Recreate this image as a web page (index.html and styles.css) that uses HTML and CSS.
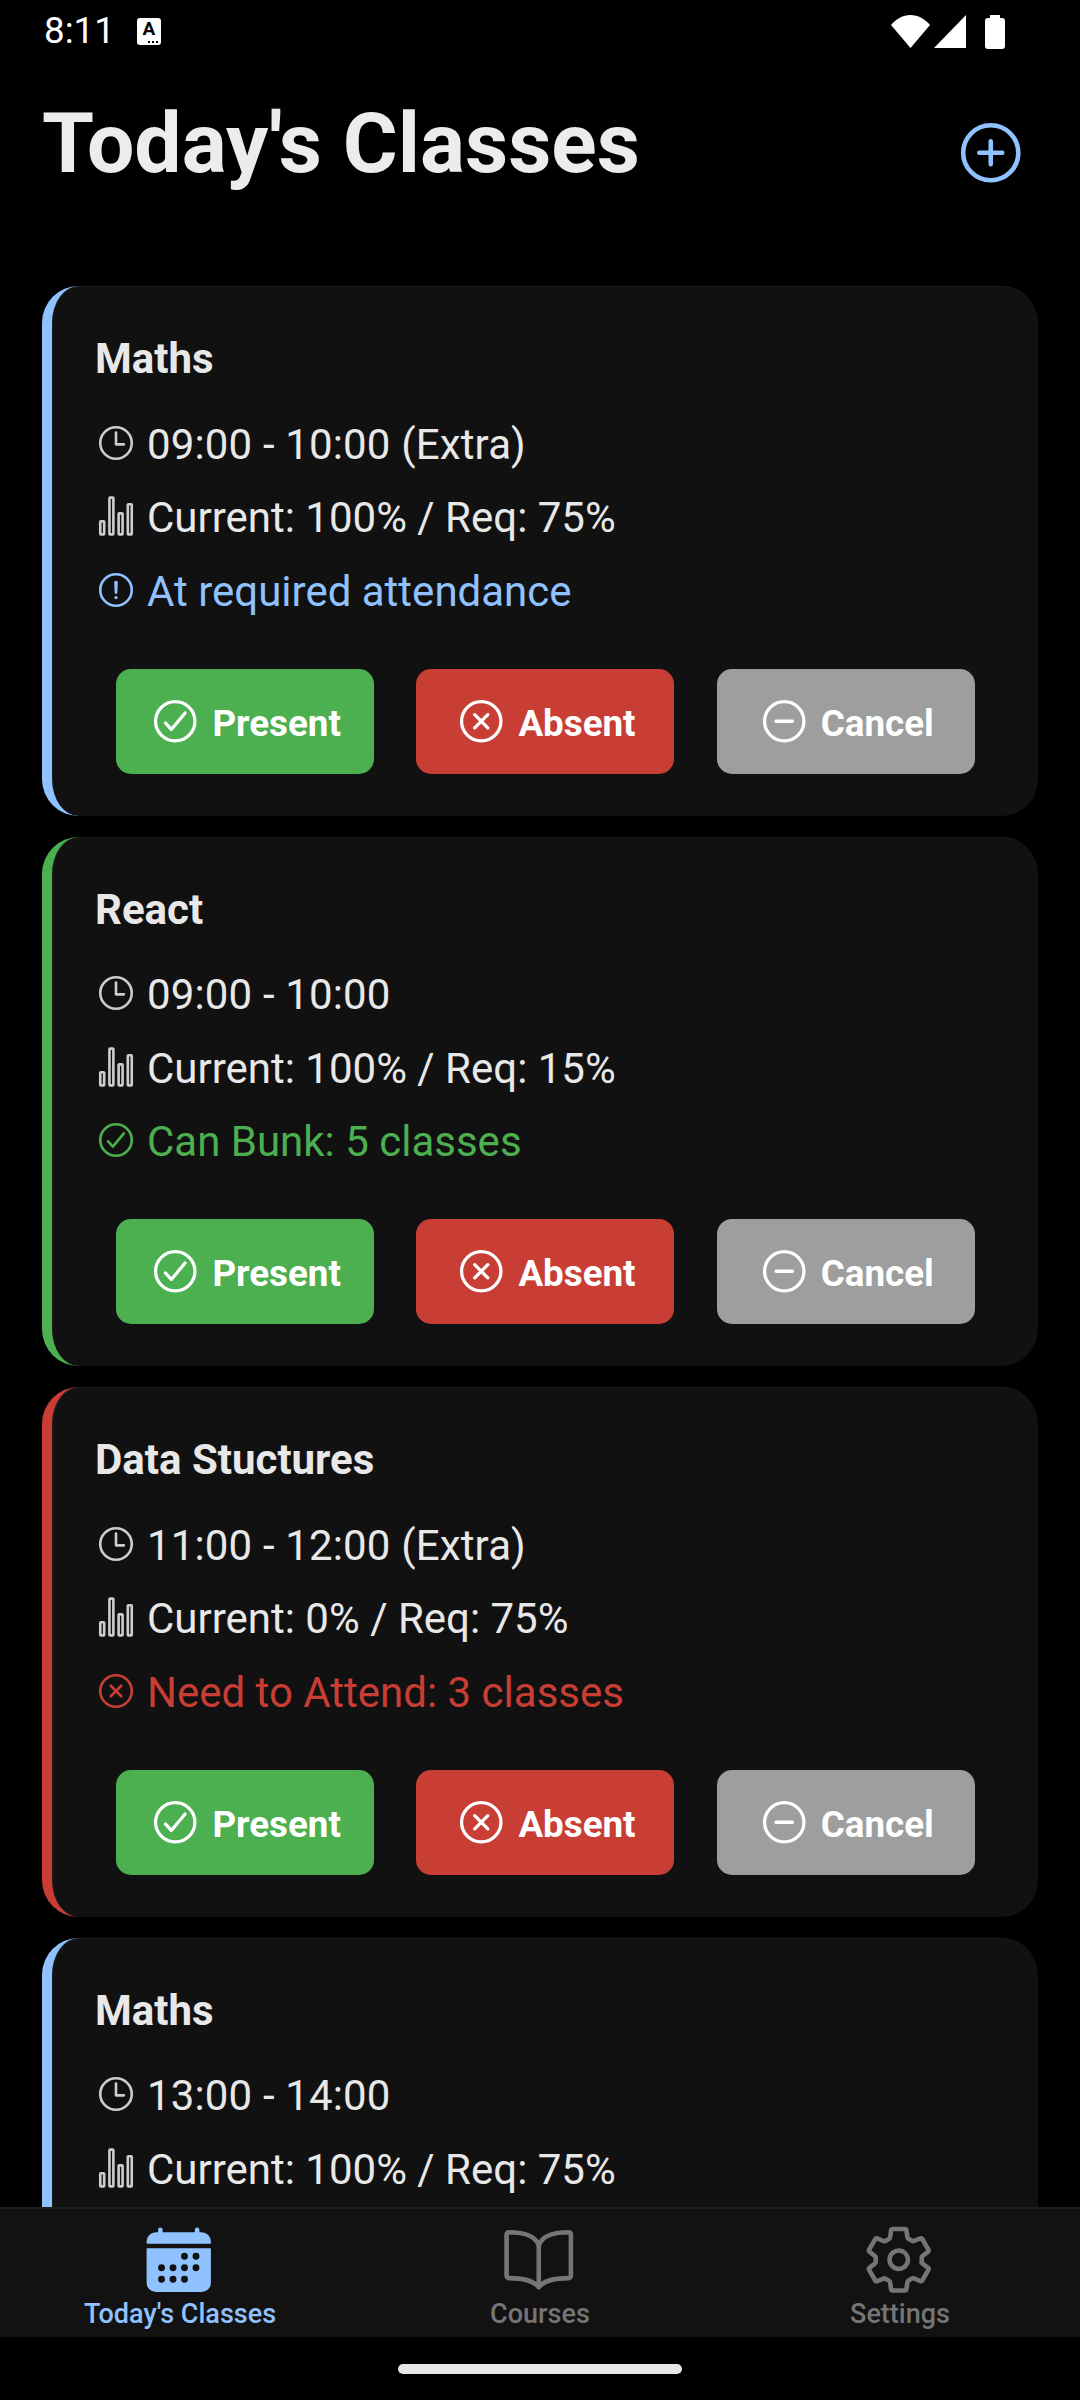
FILE: index.html
```html
<!DOCTYPE html>
<html lang="en">
<head>
    <meta charset="UTF-8">
    <title>Today's Classes</title>
    <link rel="stylesheet" href="styles.css">
</head>
<body>

<svg class="defs" width="0" height="0">
    <defs>
        <symbol id="i-time" viewBox="0 0 512 512">
            <path class="line" d="M256 64C150 64 64 150 64 256s86 192 192 192 192-86 192-192S362 64 256 64z"/>
            <path class="line" d="M256 128v144h96"/>
        </symbol>
        <symbol id="i-stats" viewBox="0 0 512 512">
            <rect class="line" x="64" y="320" width="48" height="160" rx="8" ry="8"/>
            <rect class="line" x="288" y="224" width="48" height="256" rx="8" ry="8"/>
            <rect class="line" x="400" y="112" width="48" height="368" rx="8" ry="8"/>
            <rect class="line" x="176" y="32" width="48" height="448" rx="8" ry="8"/>
        </symbol>
        <symbol id="i-alert" viewBox="0 0 512 512">
            <path class="line" d="M448 256c0-106-86-192-192-192S64 150 64 256s86 192 192 192 192-86 192-192z"/>
            <path class="line" d="M250.26 166.05L256 288l5.73-121.95a5.74 5.74 0 00-5.79-6h0a5.74 5.74 0 00-5.68 6z"/>
            <path class="solid" d="M256 367.91a20 20 0 1120-20 20 20 0 01-20 20z"/>
        </symbol>
        <symbol id="i-check" viewBox="0 0 512 512">
            <path class="line" d="M448 256c0-106-86-192-192-192S64 150 64 256s86 192 192 192 192-86 192-192z"/>
            <path class="line" d="M352 176L217.6 336 160 272"/>
        </symbol>
        <symbol id="i-close" viewBox="0 0 512 512">
            <path class="line" d="M448 256c0-106-86-192-192-192S64 150 64 256s86 192 192 192 192-86 192-192z"/>
            <path class="line" d="M320 320L192 192M192 320l128-128"/>
        </symbol>
        <symbol id="i-remove" viewBox="0 0 512 512">
            <path class="line" d="M448 256c0-106-86-192-192-192S64 150 64 256s86 192 192 192 192-86 192-192z"/>
            <path class="line" d="M336 256H176"/>
        </symbol>
        <symbol id="i-add" viewBox="0 0 512 512">
            <path class="line" d="M448 256c0-106-86-192-192-192S64 150 64 256s86 192 192 192 192-86 192-192z"/>
            <path class="line" d="M256 176v160M336 256H176"/>
        </symbol>
        <symbol id="i-calendar" viewBox="0 0 512 512">
            <path class="solid" d="M480 128a64 64 0 00-64-64h-16V48.45c0-8.61-6.62-16-15.23-16.43A16 16 0 00368 48v16H144V48.45c0-8.61-6.62-16-15.23-16.43A16 16 0 00112 48v16H96a64 64 0 00-64 64v12a4 4 0 004 4h440a4 4 0 004-4zM32 416a64 64 0 0064 64h320a64 64 0 0064-64V179a3 3 0 00-3-3H35a3 3 0 00-3 3zm344-208a24 24 0 11-24 24 24 24 0 0124-24zm0 80a24 24 0 11-24 24 24 24 0 0124-24zm-80-80a24 24 0 11-24 24 24 24 0 0124-24zm0 80a24 24 0 11-24 24 24 24 0 0124-24zm0 80a24 24 0 11-24 24 24 24 0 0124-24zm-80-80a24 24 0 11-24 24 24 24 0 0124-24zm0 80a24 24 0 11-24 24 24 24 0 0124-24zm-80-80a24 24 0 11-24 24 24 24 0 0124-24zm0 80a24 24 0 11-24 24 24 24 0 0124-24z"/>
        </symbol>
        <symbol id="i-book" viewBox="0 0 512 512">
            <path class="line" d="M256 160c16-63.16 76.43-95.41 208-96a15.94 15.94 0 0116 16v288a16 16 0 01-16 16c-128 0-177.45 25.81-208 64-30.37-38-80-64-208-64-9.88 0-16-8.05-16-17.93V80a15.94 15.94 0 0116-16c131.57.59 192 32.84 208 96zM256 160v288"/>
        </symbol>
        <symbol id="i-settings" viewBox="0 0 512 512">
            <path class="line" d="M262.29 192.31a64 64 0 1057.4 57.4 64.13 64.13 0 00-57.4-57.4zM416.39 256a154.34 154.34 0 01-1.53 20.79l45.21 35.46a10.81 10.81 0 012.45 13.75l-42.77 74a10.81 10.81 0 01-13.14 4.59l-44.9-18.08a16.11 16.11 0 00-15.17 1.75A164.48 164.48 0 01325 400.8a15.94 15.94 0 00-8.82 12.14l-6.73 47.89a11.08 11.08 0 01-10.68 9.17h-85.54a11.11 11.11 0 01-10.69-8.87l-6.72-47.82a16.07 16.07 0 00-9-12.22 155.3 155.3 0 01-21.46-12.57 16 16 0 00-15.11-1.71l-44.89 18.07a10.81 10.81 0 01-13.14-4.58l-42.77-74a10.8 10.8 0 012.45-13.75l38.21-30a16.05 16.05 0 006-14.08c-.36-4.17-.58-8.33-.58-12.5s.21-8.27.58-12.35a16 16 0 00-6.07-13.94l-38.19-30A10.81 10.81 0 0149.48 186l42.77-74a10.81 10.81 0 0113.14-4.59l44.9 18.08a16.11 16.11 0 0015.17-1.75A164.48 164.48 0 01187 111.2a15.94 15.94 0 008.82-12.14l6.73-47.89A11.08 11.08 0 01213.23 42h85.54a11.11 11.11 0 0110.69 8.87l6.72 47.82a16.07 16.07 0 009 12.22 155.3 155.3 0 0121.46 12.57 16 16 0 0015.11 1.71l44.89-18.07a10.81 10.81 0 0113.14 4.58l42.77 74a10.8 10.8 0 01-2.45 13.75l-38.21 30a16.05 16.05 0 00-6.05 14.08c.33 4.14.55 8.3.55 12.47z"/>
        </symbol>
    </defs>
</svg>

<div class="app">
    <div class="status-bar">
        <span class="clock">8:11</span>
        <span class="a-badge"><span class="a-letter">A</span><span class="a-dots"></span></span>
        <span class="status-right">
            <svg class="wifi" viewBox="0 0 39 33"><path d="M19.500 33 0 10C5 4 12 0 19.500 0S34 4 39 10z"/></svg>
            <svg class="signal" viewBox="0 0 32 33"><path d="M32 0v33H0z"/></svg>
            <svg class="battery" viewBox="0 0 20 34"><path d="M5 0h10v3h2a3 3 0 0 1 3 3v25a3 3 0 0 1-3 3H3a3 3 0 0 1-3-3V6a3 3 0 0 1 3-3h2z"/></svg>
        </span>
    </div>

    <div class="header">
        <h1>Today's Classes</h1>
        <svg class="add-icon"><use href="#i-add"/></svg>
    </div>

    <div class="list">
        <div class="card card-blue">
            <div class="card-title">Maths</div>
            <div class="row"><svg class="row-icon"><use href="#i-time"/></svg><span class="time">09:00 - 10:00 (Extra)</span></div>
            <div class="row"><svg class="row-icon"><use href="#i-stats"/></svg><span>Current: 100% / Req: 75%</span></div>
            <div class="row row-blue"><svg class="row-icon"><use href="#i-alert"/></svg><span>At required attendance</span></div>
            <div class="actions">
                <div class="btn btn-present"><svg class="btn-icon"><use href="#i-check"/></svg><span>Present</span></div>
                <div class="btn btn-absent"><svg class="btn-icon"><use href="#i-close"/></svg><span>Absent</span></div>
                <div class="btn btn-cancel"><svg class="btn-icon"><use href="#i-remove"/></svg><span>Cancel</span></div>
            </div>
        </div>

        <div class="card card-green">
            <div class="card-title">React</div>
            <div class="row"><svg class="row-icon"><use href="#i-time"/></svg><span class="time">09:00 - 10:00</span></div>
            <div class="row"><svg class="row-icon"><use href="#i-stats"/></svg><span>Current: 100% / Req: 15%</span></div>
            <div class="row row-green"><svg class="row-icon"><use href="#i-check"/></svg><span>Can Bunk: 5 classes</span></div>
            <div class="actions">
                <div class="btn btn-present"><svg class="btn-icon"><use href="#i-check"/></svg><span>Present</span></div>
                <div class="btn btn-absent"><svg class="btn-icon"><use href="#i-close"/></svg><span>Absent</span></div>
                <div class="btn btn-cancel"><svg class="btn-icon"><use href="#i-remove"/></svg><span>Cancel</span></div>
            </div>
        </div>

        <div class="card card-red">
            <div class="card-title">Data Stuctures</div>
            <div class="row"><svg class="row-icon"><use href="#i-time"/></svg><span class="time">11:00 - 12:00 (Extra)</span></div>
            <div class="row"><svg class="row-icon"><use href="#i-stats"/></svg><span>Current: 0% / Req: 75%</span></div>
            <div class="row row-red"><svg class="row-icon"><use href="#i-close"/></svg><span>Need to Attend: 3 classes</span></div>
            <div class="actions">
                <div class="btn btn-present"><svg class="btn-icon"><use href="#i-check"/></svg><span>Present</span></div>
                <div class="btn btn-absent"><svg class="btn-icon"><use href="#i-close"/></svg><span>Absent</span></div>
                <div class="btn btn-cancel"><svg class="btn-icon"><use href="#i-remove"/></svg><span>Cancel</span></div>
            </div>
        </div>

        <div class="card card-blue">
            <div class="card-title">Maths</div>
            <div class="row"><svg class="row-icon"><use href="#i-time"/></svg><span class="time">13:00 - 14:00</span></div>
            <div class="row"><svg class="row-icon"><use href="#i-stats"/></svg><span>Current: 100% / Req: 75%</span></div>
        </div>
    </div>

    <div class="tabbar">
        <div class="tab tab-active"><svg class="tab-icon"><use href="#i-calendar"/></svg><span>Today's Classes</span></div>
        <div class="tab"><svg class="tab-icon"><use href="#i-book"/></svg><span>Courses</span></div>
        <div class="tab"><svg class="tab-icon"><use href="#i-settings"/></svg><span>Settings</span></div>
    </div>

    <div class="nav-area"><div class="home-pill"></div></div>
</div>

</body>
</html>
```

FILE: styles.css
```css
* { box-sizing: border-box; }
html, body { margin: 0; padding: 0; background: #000; }
body { font-family: Roboto, "Noto Sans", sans-serif; color: #eee; }
.defs { position: absolute; }
.line { fill: none; stroke: currentColor; stroke-width: 32; stroke-linecap: round; stroke-linejoin: round; }
.solid { fill: currentColor; }

.app { width: 1080px; height: 2400px; display: flex; flex-direction: column; overflow: hidden; background: #000; }

/* status bar */
.status-bar { height: 63px; flex: none; display: flex; align-items: center; padding: 0 75px 0 44px; color: #fff; }
.clock { font-size: 36.75px; line-height: 1; }
.a-badge { position: relative; width: 24px; height: 27px; margin-left: 22px; background: #fff; border-radius: 3px; text-align: center; }
.a-letter { display: block; font-size: 19px; font-weight: 700; color: #000; line-height: 22px; }
.a-dots { position: absolute; right: 3px; bottom: 2px; width: 10px; height: 2px; background: repeating-linear-gradient(90deg, #000 0 2px, transparent 2px 4px); }
.status-right { margin-left: auto; display: flex; align-items: center; }
.status-right svg { fill: #fff; display: block; }
.wifi { width: 39px; height: 33px; }
.signal { width: 32px; height: 33px; margin-left: 4px; }
.battery { width: 20px; height: 34px; margin-left: 19px; }

/* header */
.header { height: 223px; flex: none; display: flex; align-items: flex-start; justify-content: space-between; padding: 38px 42px 0; }
h1 { margin: 0; font-size: 84px; line-height: 86px; font-weight: 700; color: #ececec; }
.add-icon { width: 73.5px; height: 73.5px; margin: 15px 11px 0 0; color: #90c2ff; }

/* cards */
.list { flex: 1; min-height: 0; overflow: hidden; padding: 0 42px; }
.card { background: #111; border-radius: 36.75px; border-left: 10.5px solid; padding: 42px 42px 42px 43px; margin-bottom: 21px; box-shadow: inset 1px 1px 0 #1c1c1c; }
.card-blue { border-left-color: #90c2ff; }
.card-green { border-left-color: #4caf50; }
.card-red { border-left-color: #c83e35; }
.card-title { font-size: 42px; line-height: 61px; font-weight: 700; color: #e8e8e8; margin-bottom: 29px; }
.row { height: 52.5px; display: flex; align-items: center; gap: 10px; font-size: 42px; color: #e8e8e8; margin-bottom: 21px; white-space: nowrap; }
.time { letter-spacing: .15px; }
.row-icon { width: 42px; height: 42px; flex: none; margin-bottom: 3px; color: #ccc; }
.row-blue, .row-blue .row-icon { color: #90c2ff; }
.row-green, .row-green .row-icon { color: #4caf50; }
.row-red, .row-red .row-icon { color: #c83e35; }

/* action buttons */
.actions { display: flex; justify-content: space-around; margin-top: 51px; }
.btn { width: 258px; height: 105px; border-radius: 15px; display: flex; align-items: center; justify-content: center; gap: 10.5px; color: #fff; font-size: 36.75px; font-weight: 700; }
.btn span { padding-top: 4px; }
.btn-icon { width: 52.5px; height: 52.5px; flex: none; }
.btn-present { background: #4caf50; }
.btn-absent { background: #c83e35; }
.btn-cancel { background: #9e9e9e; }

/* bottom tabs */
.tabbar { height: 130px; flex: none; display: flex; background: #121212; border-top: 2px solid #1e1e1e; position: relative; }
.tab { flex: 1; display: flex; flex-direction: column; align-items: center; color: #757575; font-size: 27px; font-weight: 500; line-height: 31px; padding-top: 14px; }
.tab span { padding-top: 2px; }
.tab-icon { width: 73.5px; height: 73.5px; margin-right: 2px; }
.tab-active { color: #90c2ff; }

.nav-area { height: 63px; flex: none; display: flex; justify-content: center; padding-top: 27px; }
.home-pill { width: 284px; height: 10px; border-radius: 5px; background: #e8e8e8; }
```
